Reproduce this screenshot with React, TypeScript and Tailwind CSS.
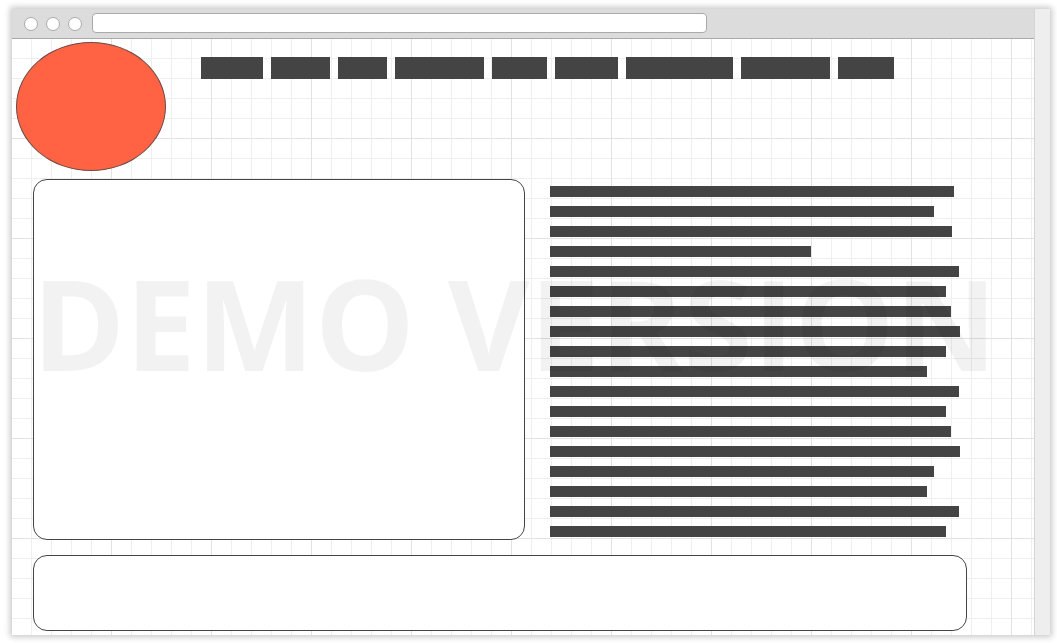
import React from 'react';

const navWidths = [62, 59, 49, 89, 55, 63, 107, 89, 56];
const lineWidths = [404, 384, 402, 261, 409, 396, 401, 410, 396, 377, 409, 396, 401, 410, 384, 377, 409, 396];

const Dot: React.FC = () => (
  <div className="w-[14px] h-[14px] rounded-full bg-white border border-[#aaaaaa]" />
);

export default function App() {
  return (
    <div className="relative w-[1057px] h-[643px] overflow-hidden bg-white pl-[12px] pt-[9px]">
      <div className="flex w-[1038px] h-[626px] shadow-[0_0_6px_2px_rgba(0,0,0,0.22)]">
        <div className="flex flex-col w-[1022px] h-full bg-white">
          {/* browser chrome */}
          <div className="flex items-center h-[30px] shrink-0 pl-[12px] bg-[#dcdcdc] border-b border-[#aaaaaa]">
            <div className="flex gap-2">
              <Dot />
              <Dot />
              <Dot />
            </div>
            <div className="w-[615px] h-[20px] ml-[10px] -mt-[1px] rounded-[4px] bg-white border border-[#aaaaaa]" />
          </div>

          {/* page area with the wireframe grid */}
          <div className="flex-1 min-h-0 bg-white bg-[linear-gradient(to_right,#e2e2e2_1px,transparent_1px),linear-gradient(to_bottom,#e2e2e2_1px,transparent_1px),linear-gradient(to_right,#efefef_1px,transparent_1px),linear-gradient(to_bottom,#efefef_1px,transparent_1px)] bg-[size:100px_100px,100px_100px,20px_20px,20px_20px] bg-[position:-1px_-1px,-1px_-1px,-1px_-1px,-1px_-1px]">
            <div className="flex items-start h-[132px] pt-[3px] pl-[4px]">
              <div className="w-[150px] h-[129px] rounded-[50%] bg-[#ff6344] border border-[#6b4a42]" />
              <div className="flex gap-2 ml-[35px] mt-[15px]">
                {navWidths.map((w, i) => (
                  <div key={i} className="h-[22px] bg-[#444444]" style={{ width: w }} />
                ))}
              </div>
            </div>
            <div className="flex pl-[21px] mt-[8px]">
              <div className="w-[492px] h-[361px] rounded-[14px] bg-white border border-[#444444]" />
              <div className="flex flex-col gap-[9px] ml-[25px] pt-[7px]">
                {lineWidths.map((w, i) => (
                  <div key={i} className="h-[11px] bg-[#444444]" style={{ width: w }} />
                ))}
              </div>
            </div>
            <div className="w-[934px] h-[76px] ml-[21px] mt-[15px] rounded-[14px] bg-white border border-[#444444]" />
          </div>
        </div>
        {/* scrollbar strip */}
        <div className="w-[16px] h-full bg-[#eeeeee] border-l border-[#d4d4d4]" />
      </div>

      {/* watermark over everything */}
      <div className="absolute left-[32px] top-[236px] whitespace-nowrap pointer-events-none font-['Open_Sans',sans-serif] font-bold text-[126px] leading-[172px] text-black/5">
        DEMO VERSION
      </div>
    </div>
  );
}
